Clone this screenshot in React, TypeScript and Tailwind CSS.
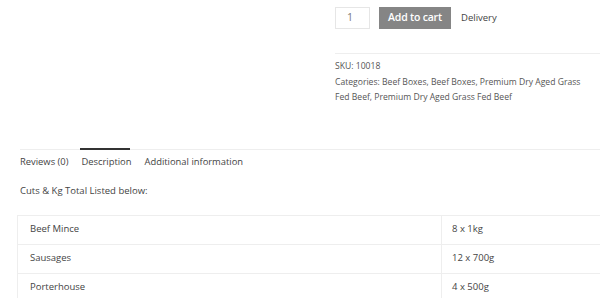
import React from "react";

export default function App() {
  const rows = [
    ["Beef Mince", "8 x 1kg"],
    ["Sausages", "12 x 700g"],
    ["Porterhouse", "4 x 500g"],
  ];
  return (
    <div
      className="w-[600px] h-[298px] overflow-hidden bg-white text-[#555]"
      style={{ fontFamily: '"Open Sans", "Noto Sans", sans-serif' }}
    >
      <div className="flex">
        <div className="w-[335px] shrink-0" />
        <div className="flex-1 pt-[7px]">
          <div className="flex items-center">
            <div className="w-[35px] h-[22px] border border-[#e6e6e6] flex items-center pl-[11px] text-[10.5px] text-[#777]">
              1
            </div>
            <div className="ml-[9px] w-[72px] h-[22px] bg-[#858585] text-white text-[10.5px] font-semibold flex items-center justify-center tracking-[-0.2px]">
              Add to cart
            </div>
            <div className="ml-[10px] text-[9.5px] text-[#444]">Delivery</div>
          </div>
          <div className="mt-[24px] border-t border-[#eeeeee] pt-[5px] text-[8.6px] leading-[15.5px] text-[#555]">
            <div>SKU: 10018</div>
            <div className="pr-[10px]">
              Categories: Beef Boxes, Beef Boxes, Premium Dry Aged Grass Fed Beef, Premium Dry Aged Grass Fed Beef
            </div>
          </div>
        </div>
      </div>

      <div className="ml-[20px] mt-[43px] border-t border-[#eeeeee] relative">
        <div className="absolute left-[60px] top-[-2px] w-[50px] h-[2px] bg-[#333]" />
        <div className="flex gap-[13px] pt-[4px] text-[9.4px] leading-[16px] text-[#444]">
          <span>Reviews (0)</span>
          <span>Description</span>
          <span>Additional information</span>
        </div>
        <div className="mt-[13px] text-[9.5px] leading-[16px] text-[#444]">
          Cuts &amp; Kg Total Listed below:
        </div>
      </div>

      <div className="ml-[17px] mt-[16px] border-t border-l border-[#eeeeee]">
        {rows.map(([a, b]) => (
          <div key={a} className="flex h-[29px] border-b border-[#eeeeee] text-[9.5px] text-[#444]">
            <div className="w-[424px] border-r border-[#eeeeee] flex items-center pl-[12px]">{a}</div>
            <div className="flex-1 flex items-center pl-[10px]">{b}</div>
          </div>
        ))}
      </div>
    </div>
  );
}
